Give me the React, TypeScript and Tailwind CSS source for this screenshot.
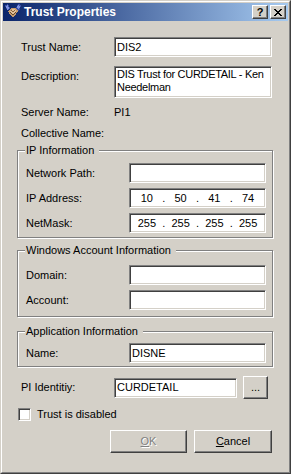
import React from "react"

const sunken =
  "bg-white border border-t-[#808080] border-l-[#808080] border-b-white border-r-white shadow-[inset_1px_1px_0_#404040,inset_-1px_-1px_0_#d4d0c8]"
const raised =
  "bg-[#d4d0c8] border border-t-white border-l-white border-b-[#404040] border-r-[#404040] shadow-[inset_-1px_-1px_0_#808080,inset_1px_1px_0_#d4d0c8]"

function HandshakeIcon() {
  return (
    <svg width="16" height="16" viewBox="0 0 16 16" shapeRendering="crispEdges">
      <polygon points="0,1 3,0 5,4 3,7 1,5" fill="#3a4fa8" />
      <polygon points="16,1 13,0 11,4 13,7 15,5" fill="#3a4fa8" />
      <polygon points="1,2 3,1 4,4 2,6" fill="#7f93e0" />
      <polygon points="15,2 13,1 12,4 14,6" fill="#7f93e0" />
      <polygon points="3,7 6,4 10,4 13,7 10,12 8,13 6,12" fill="#c49a6c" />
      <polygon points="5,7 7,5 9,5 11,7 9,10 7,10" fill="#e2c29a" />
      <polyline points="5,8 8,11 11,8" fill="none" stroke="#6b4a2a" strokeWidth="1" />
      <polyline points="6,6 8,8 10,6" fill="none" stroke="#8a6338" strokeWidth="1" />
    </svg>
  )
}

function Field({ value = "", className = "" }: { value?: string; className?: string }) {
  return (
    <div className={`${sunken} h-[20px] flex items-center pl-[2px] text-black ${className}`}>
      {value}
    </div>
  )
}

function IpField({ parts }: { parts: string[] }) {
  return (
    <div className={`${sunken} h-[20px] w-[137px] flex items-center px-[2px]`}>
      {parts.map((p, i) => (
        <React.Fragment key={i}>
          <span className="flex-1 text-center">{p}</span>
          {i < parts.length - 1 && <span className="w-[4px] text-center">.</span>}
        </React.Fragment>
      ))}
    </div>
  )
}

function Group({ title, children, className = "" }: { title: string; children: React.ReactNode; className?: string }) {
  return (
    <fieldset
      className={`border border-[#808080] shadow-[inset_1px_1px_0_#ffffff,1px_1px_0_#ffffff] ml-[14px] mr-[15px] pl-[8px] ${className}`}
    >
      <legend className="-ml-[1px] pl-[1px] pr-[5px] h-[14px] leading-[14px] bg-[#d4d0c8]">{title}</legend>
      {children}
    </fieldset>
  )
}

function GroupRow({ label, children }: { label: string; children: React.ReactNode }) {
  return (
    <div className="flex items-center h-[20px]">
      <span className="w-[103px]">{label}</span>
      {children}
    </div>
  )
}

export default function App() {
  return (
    <div className="w-[291px] h-[474px] font-['Liberation_Sans',Arial,sans-serif] text-[11px] text-black">
      <div className="w-full h-full border border-t-[#d4d0c8] border-l-[#d4d0c8] border-b-[#404040] border-r-[#404040]">
        <div className="w-full h-full border border-t-white border-l-white border-b-[#808080] border-r-[#808080] bg-[#d4d0c8] p-[1px] flex flex-col">
          {/* title bar */}
          <div className="h-[18px] flex items-center pl-[2px] pr-[2px] bg-[linear-gradient(to_right,#0a246a,#a6caf0)]">
            <HandshakeIcon />
            <span className="ml-[3px] text-white font-bold text-[12px] leading-none">Trust Properties</span>
            <div className="ml-auto flex gap-[2px]">
              <div className={`${raised} w-[16px] h-[14px] flex items-center justify-center font-bold text-[11px] leading-none`}>
                ?
              </div>
              <div className={`${raised} w-[16px] h-[14px] flex items-center justify-center`}>
                <svg width="8" height="7" viewBox="0 0 8 7" shapeRendering="crispEdges">
                  <path d="M0 0h2v1h-2zM6 0h2v1h-2zM1 1h2v1h-2zM5 1h2v1h-2zM2 2h4v1h-4zM3 3h2v1h-2zM2 4h4v1h-4zM1 5h2v1h-2zM5 5h2v1h-2zM0 6h2v1h-2zM6 6h2v1h-2z" fill="#000" />
                </svg>
              </div>
            </div>
          </div>

          {/* top fields */}
          <div className="pl-[18px] pr-[16px]">
            <div className="mt-[16px] flex items-center h-[20px]">
              <span className="w-[93px]">Trust Name:</span>
              <Field value="DIS2" className="w-[158px]" />
            </div>
            <div className="mt-[9px] flex">
              <span className="w-[93px] pt-[2px]">Description:</span>
              <div className={`${sunken} w-[158px] h-[32px] pl-[2px] pt-[1px] leading-[13px] whitespace-nowrap overflow-hidden tracking-[-0.3px]`}>
                DIS Trust for CURDETAIL - Ken
                <br />
                Needelman
              </div>
            </div>
            <div className="mt-[7px] flex items-center h-[14px]">
              <span className="w-[93px]">Server Name:</span>
              <span>PI1</span>
            </div>
            <div className="mt-[7px] flex items-center h-[14px]">
              <span className="w-[93px]">Collective Name:</span>
            </div>
          </div>

          <Group title="IP Information" className="mt-[3px] pb-[4px]">
            <div className="mt-[6px] flex flex-col gap-[5px]">
              <GroupRow label="Network Path:">
                <Field className="w-[137px]" />
              </GroupRow>
              <GroupRow label="IP Address:">
                <IpField parts={["10", "50", "41", "74"]} />
              </GroupRow>
              <GroupRow label="NetMask:">
                <IpField parts={["255", "255", "255", "255"]} />
              </GroupRow>
            </div>
          </Group>

          <Group title="Windows Account Information" className="mt-[5px] pb-[6px]">
            <div className="mt-[8px] flex flex-col gap-[5px]">
              <GroupRow label="Domain:">
                <Field className="w-[137px]" />
              </GroupRow>
              <GroupRow label="Account:">
                <Field className="w-[137px]" />
              </GroupRow>
            </div>
          </Group>

          <Group title="Application Information" className="mt-[7px] pb-[3px]">
            <div className="mt-[5px] flex flex-col">
              <GroupRow label="Name:">
                <Field value="DISNE" className="w-[137px]" />
              </GroupRow>
            </div>
          </Group>

          <div className="pl-[18px] mt-[9px] flex items-center h-[23px]">
            <span className="w-[93px]">PI Identitiy:</span>
            <Field value="CURDETAIL" className="w-[123px]" />
            <div className={`${raised} ml-[6px] w-[25px] h-[23px] flex items-center justify-center`}>...</div>
          </div>

          <div className="pl-[15px] mt-[9px] flex items-center h-[13px]">
            <div className={`${sunken} w-[13px] h-[13px]`} />
            <span className="ml-[6px]">Trust is disabled</span>
          </div>

          <div className="mt-[9px] pr-[16px] flex justify-end gap-[7px]">
            <div className={`${raised} w-[77px] h-[23px] flex items-center justify-center text-[#808080] [text-shadow:1px_1px_0_#ffffff]`}>
              <span>
                <span className="underline">O</span>K
              </span>
            </div>
            <div className={`${raised} w-[78px] h-[23px] flex items-center justify-center`}>
              <span>
                <span className="underline">C</span>ancel
              </span>
            </div>
          </div>
        </div>
      </div>
    </div>
  )
}
